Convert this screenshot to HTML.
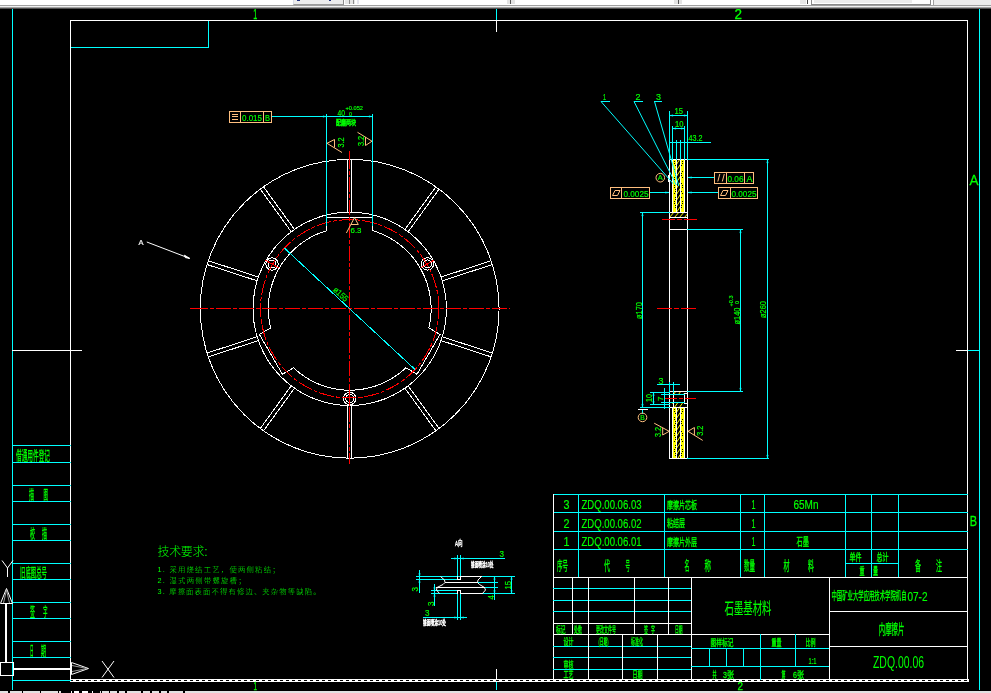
<!DOCTYPE html>
<html lang="zh-CN">
<head>
<meta charset="utf-8">
<title>内摩擦片 ZDQ.00.06</title>
<style>
html,body{margin:0;padding:0;background:#000;overflow:hidden}
#app{position:relative;width:991px;height:693px;background:#000;overflow:hidden}
#topbar{position:absolute;left:0;top:0;width:991px;height:9px;background:linear-gradient(#fff 0,#fff 5px,#a0a0a0 5px,#a0a0a0 6px,#f0f0f0 6px,#f0f0f0 7px,#a0a0a0 7px,#a0a0a0 8px,#505050 8px,#505050 9px)}
#topbar i{position:absolute;top:0;height:4px;display:block}
#botbar{position:absolute;left:0;top:691px;width:991px;height:2px;background:#000}
#botbar i{position:absolute;top:0;height:2px;display:block;background:#e2e2e2}
svg{position:absolute;left:0;top:0;will-change:transform}
.t{font-family:"Liberation Sans","Noto Sans CJK SC",sans-serif}
.tc{font-family:"Liberation Sans","Noto Sans CJK SC",sans-serif}
.tl{font-family:"Liberation Sans","Noto Sans CJK SC",sans-serif;font-weight:300}
</style>
</head>
<body>
<div id="app">
<svg width="991" height="693" viewBox="0 0 991 693">
<rect width="991" height="693" fill="#000"/>
<g shape-rendering="crispEdges" fill="none" stroke-width="1">
<line x1="12.5" y1="9" x2="12.5" y2="690" stroke="#00ffff"/>
<line x1="979.5" y1="9" x2="979.5" y2="690" stroke="#00ffff"/>
<line x1="70" y1="47.5" x2="209" y2="47.5" stroke="#00ffff"/>
<line x1="208.5" y1="20" x2="208.5" y2="48" stroke="#00ffff"/>
<line x1="70" y1="20.5" x2="968" y2="20.5" stroke="#ffffff"/>
<line x1="70.5" y1="20" x2="70.5" y2="682" stroke="#ffffff"/>
<line x1="967.5" y1="20" x2="967.5" y2="682" stroke="#ffffff"/>
<line x1="70" y1="679.5" x2="969" y2="679.5" stroke="#ffffff"/>
<line x1="70" y1="681.5" x2="969" y2="681.5" stroke="#ffffff"/>
<line x1="70" y1="680.5" x2="969" y2="680.5" stroke="#fff" stroke-dasharray="3 3" stroke-dashoffset="3"/>
<line x1="496.5" y1="9" x2="496.5" y2="20" stroke="#00ffff"/>
<line x1="496.5" y1="20" x2="496.5" y2="32" stroke="#ffffff"/>
<line x1="496.5" y1="669" x2="496.5" y2="679" stroke="#ffffff"/>
<line x1="496.5" y1="682" x2="496.5" y2="690" stroke="#00ffff"/>
<line x1="12" y1="350.5" x2="82" y2="350.5" stroke="#ffffff"/>
<line x1="956" y1="350.5" x2="968" y2="350.5" stroke="#ffffff"/>
<line x1="968" y1="350.5" x2="980" y2="350.5" stroke="#00ffff"/>
<line x1="12" y1="445.5" x2="71" y2="445.5" stroke="#00ffff"/>
<line x1="12" y1="462.5" x2="71" y2="462.5" stroke="#00ffff"/>
<line x1="12" y1="485.5" x2="71" y2="485.5" stroke="#00ffff"/>
<line x1="12" y1="501.5" x2="71" y2="501.5" stroke="#00ffff"/>
<line x1="12" y1="524.5" x2="71" y2="524.5" stroke="#00ffff"/>
<line x1="12" y1="540.5" x2="71" y2="540.5" stroke="#00ffff"/>
<line x1="12" y1="563.5" x2="71" y2="563.5" stroke="#00ffff"/>
<line x1="12" y1="579.5" x2="71" y2="579.5" stroke="#00ffff"/>
<line x1="12" y1="602.5" x2="71" y2="602.5" stroke="#00ffff"/>
<line x1="12" y1="618.5" x2="71" y2="618.5" stroke="#00ffff"/>
<line x1="12" y1="641.5" x2="71" y2="641.5" stroke="#00ffff"/>
<line x1="12" y1="657.5" x2="71" y2="657.5" stroke="#00ffff"/>
<line x1="12" y1="680.5" x2="71" y2="680.5" stroke="#00ffff"/>
<rect x="0" y="662.5" width="13" height="13" fill="none" stroke="#ffffff"/>
<line x1="14" y1="668.5" x2="71" y2="668.5" stroke="#ffffff"/>
<line x1="14" y1="669.5" x2="71" y2="669.5" stroke="#ffffff"/>
<line x1="5.5" y1="603" x2="5.5" y2="663" stroke="#ffffff"/>
<line x1="6.5" y1="603" x2="6.5" y2="663" stroke="#ffffff"/>
</g>
<g fill="none" stroke="#fff" stroke-width="1">
<path d="M0.5 603.5 L6.5 588.5 L12.5 603.5Z" stroke="#ffffff" fill="none"/>
<path d="M3.5 603 L6.5 590 L9.5 603" stroke="#999" fill="none"/>
<path d="M71.5 662.5 L88.5 668.5 L71.5 674.5Z" stroke="#ffffff" fill="none"/>
<path d="M72 665.5 L87 668.5 L72 671.5" stroke="#999" fill="none"/>
<path d="M2 560.5 L7.5 568 L13 560.5" stroke="#ffffff" fill="none"/>
<line x1="7.5" y1="568" x2="7.5" y2="577" stroke="#ffffff"/>
<line x1="102" y1="661" x2="114" y2="677.5" stroke="#ffffff"/>
<line x1="114" y1="661" x2="102" y2="677.5" stroke="#ffffff"/>
</g>
<g shape-rendering="crispEdges" fill="none" stroke-width="1">
<line x1="553" y1="494.5" x2="968" y2="494.5" stroke="#00ffff"/>
<line x1="553" y1="512.5" x2="968" y2="512.5" stroke="#00ffff"/>
<line x1="553" y1="531.5" x2="968" y2="531.5" stroke="#00ffff"/>
<line x1="553" y1="549.5" x2="968" y2="549.5" stroke="#00ffff"/>
<line x1="578.5" y1="494" x2="578.5" y2="578" stroke="#00ffff"/>
<line x1="664.5" y1="494" x2="664.5" y2="578" stroke="#00ffff"/>
<line x1="740.5" y1="494" x2="740.5" y2="578" stroke="#00ffff"/>
<line x1="764.5" y1="494" x2="764.5" y2="578" stroke="#00ffff"/>
<line x1="845.5" y1="494" x2="845.5" y2="578" stroke="#00ffff"/>
<line x1="871.5" y1="494" x2="871.5" y2="578" stroke="#00ffff"/>
<line x1="898.5" y1="494" x2="898.5" y2="578" stroke="#00ffff"/>
<line x1="845" y1="563.5" x2="899" y2="563.5" stroke="#00ffff"/>
<line x1="553.5" y1="494" x2="553.5" y2="680" stroke="#ffffff"/>
<line x1="553" y1="577.5" x2="968" y2="577.5" stroke="#ffffff"/>
<line x1="553" y1="588.5" x2="692" y2="588.5" stroke="#00ffff"/>
<line x1="553" y1="600.5" x2="692" y2="600.5" stroke="#00ffff"/>
<line x1="553" y1="611.5" x2="692" y2="611.5" stroke="#00ffff"/>
<line x1="553" y1="623.5" x2="692" y2="623.5" stroke="#ffffff"/>
<line x1="553" y1="634.5" x2="830" y2="634.5" stroke="#ffffff"/>
<line x1="553" y1="646.5" x2="692" y2="646.5" stroke="#00ffff"/>
<line x1="553" y1="657.5" x2="692" y2="657.5" stroke="#00ffff"/>
<line x1="553" y1="669.5" x2="692" y2="669.5" stroke="#00ffff"/>
<line x1="572.5" y1="577" x2="572.5" y2="635" stroke="#ffffff"/>
<line x1="588.5" y1="577" x2="588.5" y2="635" stroke="#ffffff"/>
<line x1="634.5" y1="577" x2="634.5" y2="635" stroke="#ffffff"/>
<line x1="668.5" y1="577" x2="668.5" y2="635" stroke="#ffffff"/>
<line x1="588.5" y1="634" x2="588.5" y2="680" stroke="#ffffff"/>
<line x1="622.5" y1="634" x2="622.5" y2="680" stroke="#ffffff"/>
<line x1="657.5" y1="634" x2="657.5" y2="680" stroke="#ffffff"/>
<line x1="691.5" y1="577" x2="691.5" y2="680" stroke="#ffffff"/>
<line x1="691" y1="648.5" x2="830" y2="648.5" stroke="#00ffff"/>
<line x1="691" y1="666.5" x2="830" y2="666.5" stroke="#00ffff"/>
<line x1="709.5" y1="648" x2="709.5" y2="667" stroke="#00ffff"/>
<line x1="726.5" y1="648" x2="726.5" y2="667" stroke="#00ffff"/>
<line x1="743.5" y1="648" x2="743.5" y2="667" stroke="#00ffff"/>
<line x1="760.5" y1="634" x2="760.5" y2="680" stroke="#00ffff"/>
<line x1="795.5" y1="634" x2="795.5" y2="667" stroke="#00ffff"/>
<line x1="829.5" y1="577" x2="829.5" y2="680" stroke="#ffffff"/>
<line x1="829" y1="611.5" x2="968" y2="611.5" stroke="#ffffff"/>
<line x1="829" y1="646.5" x2="968" y2="646.5" stroke="#ffffff"/>
</g>
<g shape-rendering="crispEdges" fill="none" stroke-width="1">
<circle cx="349.7" cy="308.8" r="149.4" stroke="#ffffff" fill="none"/>
<circle cx="349.7" cy="308.8" r="96.7" stroke="#ffffff" fill="none"/>
<path d="M372.7 230.72 L372.7 217.8 L326.7 217.8 L326.7 230.72 L323.75 231.65 L320.83 232.69 L317.96 233.84 L315.13 235.1 L312.35 236.47 L309.63 237.95 L306.96 239.52 L304.36 241.2 L301.82 242.97 L299.35 244.84 L296.96 246.8 L294.64 248.85 L292.4 250.99 L290.24 253.21 L288.17 255.51 L286.19 257.89 L284.3 260.34 L282.5 262.86 L280.8 265.45 L279.21 268.1 L277.71 270.81 L276.32 273.58 L275.03 276.39 L273.85 279.25 L272.78 282.16 L271.83 285.1 L270.98 288.08 L270.25 291.09 L269.63 294.13 L269.13 297.18 L268.75 300.25 L268.48 303.34 L268.33 306.43 L268.3 309.53 L268.39 312.62 L268.59 315.71 L268.92 318.79 L269.35 321.85 L269.91 324.9 L270.58 327.92 L259.39 334.38 L282.39 374.22 L293.58 367.76 L295.86 369.85 L298.22 371.85 L300.66 373.77 L303.16 375.58 L305.74 377.31 L308.37 378.93 L311.07 380.45 L313.82 381.87 L316.63 383.18 L319.48 384.38 L322.38 385.48 L325.31 386.46 L328.28 387.33 L331.28 388.09 L334.31 388.73 L337.36 389.26 L340.43 389.67 L343.51 389.96 L346.6 390.14 L349.7 390.2 L352.8 390.14 L355.89 389.96 L358.97 389.67 L362.04 389.26 L365.09 388.73 L368.12 388.09 L371.12 387.33 L374.09 386.46 L377.02 385.48 L379.92 384.38 L382.77 383.18 L385.58 381.87 L388.33 380.45 L391.03 378.93 L393.66 377.31 L396.24 375.58 L398.74 373.77 L401.18 371.85 L403.54 369.85 L405.82 367.76 L417.01 374.22 L440.01 334.38 L428.82 327.92 L429.49 324.9 L430.05 321.85 L430.48 318.79 L430.81 315.71 L431.01 312.62 L431.1 309.53 L431.07 306.43 L430.92 303.34 L430.65 300.25 L430.27 297.18 L429.77 294.13 L429.15 291.09 L428.42 288.08 L427.57 285.1 L426.62 282.16 L425.55 279.25 L424.37 276.39 L423.08 273.58 L421.69 270.81 L420.19 268.1 L418.6 265.45 L416.9 262.86 L415.1 260.34 L413.21 257.89 L411.23 255.51 L409.16 253.21 L407 250.99 L404.76 248.85 L402.44 246.8 L400.05 244.84 L397.58 242.97 L395.04 241.2 L392.44 239.52 L389.77 237.95 L387.05 236.47 L384.27 235.1 L381.44 233.84 L378.57 232.69 L375.65 231.65Z" stroke="#ffffff" fill="none"/>
<line x1="347.7" y1="212.12" x2="347.7" y2="159.41" stroke="#ffffff"/>
<line x1="351.7" y1="212.12" x2="351.7" y2="159.41" stroke="#ffffff"/>
<line x1="291.26" y1="231.76" x2="260.27" y2="189.12" stroke="#ffffff"/>
<line x1="294.49" y1="229.41" x2="263.51" y2="186.77" stroke="#ffffff"/>
<line x1="257.13" y1="280.83" x2="207.01" y2="264.54" stroke="#ffffff"/>
<line x1="258.37" y1="277.02" x2="208.24" y2="260.73" stroke="#ffffff"/>
<line x1="258.37" y1="340.58" x2="208.24" y2="356.87" stroke="#ffffff"/>
<line x1="257.13" y1="336.77" x2="207.01" y2="353.06" stroke="#ffffff"/>
<line x1="294.49" y1="388.19" x2="263.51" y2="430.83" stroke="#ffffff"/>
<line x1="291.26" y1="385.84" x2="260.27" y2="428.48" stroke="#ffffff"/>
<line x1="351.7" y1="405.48" x2="351.7" y2="458.19" stroke="#ffffff"/>
<line x1="347.7" y1="405.48" x2="347.7" y2="458.19" stroke="#ffffff"/>
<line x1="408.14" y1="385.84" x2="439.13" y2="428.48" stroke="#ffffff"/>
<line x1="404.91" y1="388.19" x2="435.89" y2="430.83" stroke="#ffffff"/>
<line x1="442.27" y1="336.77" x2="492.39" y2="353.06" stroke="#ffffff"/>
<line x1="441.03" y1="340.58" x2="491.16" y2="356.87" stroke="#ffffff"/>
<line x1="441.03" y1="277.02" x2="491.16" y2="260.73" stroke="#ffffff"/>
<line x1="442.27" y1="280.83" x2="492.39" y2="264.54" stroke="#ffffff"/>
<line x1="404.91" y1="229.41" x2="435.89" y2="186.77" stroke="#ffffff"/>
<line x1="408.14" y1="231.76" x2="439.13" y2="189.12" stroke="#ffffff"/>
<circle cx="427.38" cy="263.95" r="6.2" stroke="#ffffff" fill="none"/>
<circle cx="427.38" cy="263.95" r="4" stroke="#ffffff" fill="none"/>
<line x1="420.89" y1="267.7" x2="433.88" y2="260.2" stroke="#ff0000"/>
<circle cx="272.02" cy="263.95" r="6.2" stroke="#ffffff" fill="none"/>
<circle cx="272.02" cy="263.95" r="4" stroke="#ffffff" fill="none"/>
<line x1="278.51" y1="267.7" x2="265.52" y2="260.2" stroke="#ff0000"/>
<circle cx="349.7" cy="398.5" r="6.2" stroke="#ffffff" fill="none"/>
<circle cx="349.7" cy="398.5" r="4" stroke="#ffffff" fill="none"/>
<line x1="349.7" y1="391" x2="349.7" y2="406" stroke="#ff0000"/>
<line x1="190" y1="308.5" x2="194" y2="308.5" stroke="#ff0000"/>
<line x1="193" y1="308.5" x2="510" y2="308.5" stroke="#ff0000" stroke-dasharray="15 2 4 2"/>
<line x1="349.5" y1="151" x2="349.5" y2="155" stroke="#ff0000"/>
<line x1="349.5" y1="154" x2="349.5" y2="464" stroke="#ff0000" stroke-dasharray="15 2 4 2"/>
<circle cx="349.7" cy="308.8" r="89.2" stroke="#ff0000" fill="none" stroke-dasharray="15 2 4 2" stroke-dashoffset="5"/>
<line x1="326.5" y1="114" x2="326.5" y2="226" stroke="#00ffff"/>
<line x1="372.5" y1="114" x2="372.5" y2="226" stroke="#00ffff"/>
<line x1="272" y1="116.5" x2="373" y2="116.5" stroke="#00ffff"/>
<line x1="284.36" y1="248.08" x2="415.04" y2="369.52" stroke="#00ffff"/>
</g>
<g shape-rendering="crispEdges" fill="none" stroke-width="1">
<rect x="229.5" y="111.5" width="42" height="11" fill="none" stroke="#ffbf7f"/>
<line x1="240.5" y1="111" x2="240.5" y2="123" stroke="#ffbf7f"/>
<line x1="263.5" y1="111" x2="263.5" y2="123" stroke="#ffbf7f"/>
<line x1="232" y1="114.5" x2="238" y2="114.5" stroke="#ffbf7f"/>
<line x1="232" y1="116.5" x2="238" y2="116.5" stroke="#ffbf7f"/>
<line x1="232" y1="119.5" x2="238" y2="119.5" stroke="#ffbf7f"/>
</g>
<g fill="none" stroke="#ffbf7f" stroke-width="1">
<path d="M334.5 139.5 L327 143.3 L342 152.5" stroke="#ffbf7f" fill="none"/>
<line x1="334.5" y1="139.5" x2="334.5" y2="147.5" stroke="#ffbf7f"/>
<path d="M365.5 145.5 L372 141.2 L357.5 132.3" stroke="#ffbf7f" fill="none"/>
<line x1="365.5" y1="137" x2="365.5" y2="145.5" stroke="#ffbf7f"/>
<path d="M346.4 233 L354.5 217.6 L358.3 224.5 L351 224.5" stroke="#ffbf7f" fill="none"/>
</g>
<g fill="none" stroke="#fff" stroke-width="1">
<line x1="146.8" y1="242" x2="189.7" y2="258.4" stroke="#ffffff"/>
<path d="M189.7 258.4 L184.5 255.2 L185.3 257.6Z" stroke="#ffffff" fill="#ffffff"/>
</g>
<g shape-rendering="crispEdges" fill="none" stroke-width="1">
<rect x="673" y="160" width="3" height="52" fill="#ffff00" stroke="none"/>
<rect x="681" y="160" width="3" height="52" fill="#ffff00" stroke="none"/>
<rect x="673" y="408" width="3" height="50" fill="#ffff00" stroke="none"/>
<rect x="681" y="408" width="3" height="50" fill="#ffff00" stroke="none"/>
</g>
<g fill="none" stroke-width="1">
<clipPath id="c1"><rect x="677" y="160" width="3" height="52"/></clipPath>
<clipPath id="c2"><rect x="677" y="408" width="3" height="50"/></clipPath>
<clipPath id="c3"><rect x="670" y="212" width="17" height="5"/></clipPath>
<clipPath id="c4"><rect x="674" y="392" width="10" height="2"/><rect x="672" y="403" width="12" height="4"/></clipPath>
<path clip-path="url(#c1)" d="M676 159 L682 150 M676 165 L682 156 M676 171 L682 162 M676 177 L682 168 M676 183 L682 174 M676 189 L682 180 M676 195 L682 186 M676 201 L682 192 M676 207 L682 198 M676 213 L682 204 M676 219 L682 210 M676 225 L682 216 M676 231 L682 222" stroke="#ffff00"/>
<path clip-path="url(#c2)" d="M676 407 L682 398 M676 413 L682 404 M676 419 L682 410 M676 425 L682 416 M676 431 L682 422 M676 437 L682 428 M676 443 L682 434 M676 449 L682 440 M676 455 L682 446 M676 461 L682 452 M676 467 L682 458 M676 473 L682 464" stroke="#ffff00"/>
<path clip-path="url(#c3)" d="M664 218 L670 211 M669 218 L675 211 M674 218 L680 211 M679 218 L685 211 M684 218 L690 211 M689 218 L695 211" stroke="#ffff00"/>
<path clip-path="url(#c4)" d="M664 408 L676 391 M669 408 L681 391 M674 408 L686 391 M679 408 L691 391 M684 408 L696 391 M689 408 L701 391" stroke="#ffff00"/>
<path d="M674 161.5 h1 M682 161.5 h1 M674 163.5 h1 M682 163.5 h1 M675 165.5 h1 M681 165.5 h1 M674 169.5 h1 M674 171.5 h1 M682 171.5 h1 M675 173.5 h1 M681 173.5 h1 M675 175.5 h1 M681 175.5 h1 M674 177.5 h1 M682 177.5 h1 M674 179.5 h1 M675 183.5 h1 M681 183.5 h1 M674 185.5 h1 M682 185.5 h1 M674 187.5 h1 M682 187.5 h1 M675 189.5 h1 M675 191.5 h1 M681 191.5 h1 M674 193.5 h1 M682 193.5 h1 M675 197.5 h1 M681 197.5 h1 M675 199.5 h1 M674 201.5 h1 M682 201.5 h1 M674 203.5 h1 M682 203.5 h1 M675 205.5 h1 M681 205.5 h1 M675 207.5 h1 M681 207.5 h1 M674 409.5 h1 M682 409.5 h1 M674 411.5 h1 M682 411.5 h1 M675 413.5 h1 M681 413.5 h1 M674 417.5 h1 M674 419.5 h1 M682 419.5 h1 M675 421.5 h1 M681 421.5 h1 M675 423.5 h1 M681 423.5 h1 M674 425.5 h1 M682 425.5 h1 M674 427.5 h1 M675 431.5 h1 M681 431.5 h1 M674 433.5 h1 M682 433.5 h1 M674 435.5 h1 M682 435.5 h1 M675 437.5 h1 M675 439.5 h1 M681 439.5 h1 M674 441.5 h1 M682 441.5 h1 M675 445.5 h1 M681 445.5 h1 M675 447.5 h1 M674 449.5 h1 M682 449.5 h1 M674 451.5 h1 M682 451.5 h1 M675 453.5 h1 M681 453.5 h1 M675 455.5 h1 M681 455.5 h1" stroke="#000" shape-rendering="crispEdges"/>
</g>
<g shape-rendering="crispEdges" fill="none" stroke-width="1">
<line x1="669.5" y1="159" x2="669.5" y2="459" stroke="#ffffff"/>
<line x1="687.5" y1="159" x2="687.5" y2="459" stroke="#ffffff"/>
<line x1="669" y1="159.5" x2="688" y2="159.5" stroke="#ffffff"/>
<line x1="669" y1="212.5" x2="688" y2="212.5" stroke="#ffffff"/>
<line x1="669" y1="217.5" x2="688" y2="217.5" stroke="#ffffff"/>
<line x1="669" y1="229.5" x2="688" y2="229.5" stroke="#ffffff"/>
<line x1="669" y1="391.5" x2="688" y2="391.5" stroke="#ffffff"/>
<line x1="669" y1="407.5" x2="688" y2="407.5" stroke="#ffffff"/>
<line x1="669" y1="458.5" x2="688" y2="458.5" stroke="#ffffff"/>
<line x1="672.5" y1="160" x2="672.5" y2="213" stroke="#ffffff"/>
<line x1="672.5" y1="407" x2="672.5" y2="459" stroke="#ffffff"/>
<line x1="676.5" y1="160" x2="676.5" y2="213" stroke="#ffffff"/>
<line x1="676.5" y1="407" x2="676.5" y2="459" stroke="#ffffff"/>
<line x1="680.5" y1="160" x2="680.5" y2="213" stroke="#ffffff"/>
<line x1="680.5" y1="407" x2="680.5" y2="459" stroke="#ffffff"/>
<line x1="684.5" y1="160" x2="684.5" y2="213" stroke="#ffffff"/>
<line x1="684.5" y1="407" x2="684.5" y2="459" stroke="#ffffff"/>
<rect x="684.5" y="393.5" width="3" height="10" fill="none" stroke="#ffffff"/>
<line x1="673.5" y1="392" x2="673.5" y2="407" stroke="#ffffff"/>
<line x1="662" y1="219.5" x2="675" y2="219.5" stroke="#ff0000"/>
<line x1="677" y1="219.5" x2="682" y2="219.5" stroke="#ff0000"/>
<line x1="684" y1="219.5" x2="697" y2="219.5" stroke="#ff0000"/>
<line x1="657" y1="308.5" x2="672" y2="308.5" stroke="#ff0000"/>
<line x1="674" y1="308.5" x2="679" y2="308.5" stroke="#ff0000"/>
<line x1="681" y1="308.5" x2="696" y2="308.5" stroke="#ff0000"/>
<line x1="665" y1="398.5" x2="677" y2="398.5" stroke="#ff0000"/>
<line x1="679" y1="398.5" x2="683" y2="398.5" stroke="#ff0000"/>
<line x1="685" y1="398.5" x2="696" y2="398.5" stroke="#ff0000"/>
<line x1="669.5" y1="111" x2="669.5" y2="160" stroke="#00ffff"/>
<line x1="687.5" y1="111" x2="687.5" y2="160" stroke="#00ffff"/>
<line x1="669" y1="115.5" x2="688" y2="115.5" stroke="#00ffff"/>
<line x1="672.5" y1="126" x2="672.5" y2="160" stroke="#00ffff"/>
<line x1="684.5" y1="126" x2="684.5" y2="160" stroke="#00ffff"/>
<line x1="672" y1="128.5" x2="685" y2="128.5" stroke="#00ffff"/>
<line x1="669" y1="142.5" x2="711" y2="142.5" stroke="#00ffff"/>
<line x1="676.5" y1="140" x2="676.5" y2="160" stroke="#00ffff"/>
<line x1="680.5" y1="140" x2="680.5" y2="160" stroke="#00ffff"/>
<line x1="687" y1="159.5" x2="769" y2="159.5" stroke="#00ffff"/>
<line x1="687" y1="458.5" x2="769" y2="458.5" stroke="#00ffff"/>
<line x1="767.5" y1="159" x2="767.5" y2="459" stroke="#00ffff"/>
<line x1="687" y1="229.5" x2="743" y2="229.5" stroke="#00ffff"/>
<line x1="687" y1="391.5" x2="743" y2="391.5" stroke="#00ffff"/>
<line x1="740.5" y1="229" x2="740.5" y2="392" stroke="#00ffff"/>
<line x1="640" y1="212.5" x2="670" y2="212.5" stroke="#00ffff"/>
<line x1="640" y1="407.5" x2="670" y2="407.5" stroke="#00ffff"/>
<line x1="642.5" y1="212" x2="642.5" y2="408" stroke="#00ffff"/>
<line x1="688" y1="177.5" x2="715" y2="177.5" stroke="#00ffff"/>
<line x1="650" y1="192.5" x2="669" y2="192.5" stroke="#00ffff"/>
<line x1="688" y1="192.5" x2="719" y2="192.5" stroke="#00ffff"/>
<line x1="601" y1="101.5" x2="610" y2="101.5" stroke="#00ffff"/>
<line x1="634" y1="101.5" x2="643" y2="101.5" stroke="#00ffff"/>
<line x1="654" y1="101.5" x2="662" y2="101.5" stroke="#00ffff"/>
<line x1="657" y1="384.5" x2="680" y2="384.5" stroke="#00ffff"/>
<line x1="669.5" y1="382" x2="669.5" y2="392" stroke="#00ffff"/>
<line x1="673.5" y1="382" x2="673.5" y2="393" stroke="#00ffff"/>
<line x1="650" y1="392.5" x2="670" y2="392.5" stroke="#00ffff"/>
<line x1="650" y1="404.5" x2="670" y2="404.5" stroke="#00ffff"/>
<line x1="653.5" y1="392" x2="653.5" y2="405" stroke="#00ffff"/>
<line x1="661" y1="394.5" x2="685" y2="394.5" stroke="#00ffff"/>
<line x1="661" y1="402.5" x2="685" y2="402.5" stroke="#00ffff"/>
<line x1="664.5" y1="388" x2="664.5" y2="409" stroke="#00ffff"/>
<line x1="638" y1="409.5" x2="648" y2="409.5" stroke="#ffffff"/>
<line x1="642.5" y1="410" x2="642.5" y2="414" stroke="#00ffff"/>
<line x1="668.5" y1="175" x2="668.5" y2="182" stroke="#ffffff"/>
<rect x="714.5" y="172.5" width="39" height="11" fill="none" stroke="#ffbf7f"/>
<line x1="726.5" y1="172" x2="726.5" y2="184" stroke="#ffbf7f"/>
<line x1="744.5" y1="172" x2="744.5" y2="184" stroke="#ffbf7f"/>
<rect x="610.5" y="187.5" width="39" height="11" fill="none" stroke="#ffbf7f"/>
<line x1="621.5" y1="187" x2="621.5" y2="199" stroke="#ffbf7f"/>
<rect x="718.5" y="187.5" width="39" height="11" fill="none" stroke="#ffbf7f"/>
<line x1="730.5" y1="187" x2="730.5" y2="199" stroke="#ffbf7f"/>
</g>
<g fill="none" stroke-width="1">
<line x1="601" y1="101.5" x2="673.5" y2="184" stroke="#00ffff"/>
<line x1="634" y1="101.5" x2="676.3" y2="185" stroke="#00ffff"/>
<line x1="654.5" y1="101.5" x2="678.8" y2="186" stroke="#00ffff"/>
<circle cx="660.3" cy="177.7" r="4.3" stroke="#ffbf7f" fill="none"/>
<circle cx="642.5" cy="417.4" r="4.3" stroke="#ffbf7f" fill="none"/>
<line x1="717.8" y1="181.5" x2="719.8" y2="174" stroke="#ffbf7f"/>
<line x1="722.3" y1="181.5" x2="724.3" y2="174" stroke="#ffbf7f"/>
<path d="M612.5 195.5 L615 190.5 L620 190.5 L617.5 195.5Z" stroke="#ffbf7f" fill="none"/>
<path d="M720.5 195.5 L723 190.5 L728 190.5 L725.5 195.5Z" stroke="#ffbf7f" fill="none"/>
<path d="M654.2 423.2 L669.2 431.3 L662.7 435" stroke="#ffbf7f" fill="none"/>
<line x1="662.7" y1="427.8" x2="662.7" y2="435" stroke="#ffbf7f"/>
<path d="M702.7 440.4 L688 431.3 L694.4 427.5" stroke="#ffbf7f" fill="none"/>
<line x1="694.4" y1="427.5" x2="694.4" y2="435.2" stroke="#ffbf7f"/>
</g>
<g shape-rendering="crispEdges" fill="none" stroke-width="1">
<line x1="451" y1="558.5" x2="505" y2="558.5" stroke="#00ffff"/>
<line x1="457.5" y1="555" x2="457.5" y2="580" stroke="#00ffff"/>
<line x1="460.5" y1="555" x2="460.5" y2="580" stroke="#00ffff"/>
<line x1="416" y1="576.5" x2="515" y2="576.5" stroke="#00ffff"/>
<line x1="416" y1="579.5" x2="458" y2="579.5" stroke="#00ffff"/>
<line x1="419.5" y1="570" x2="419.5" y2="593" stroke="#00ffff"/>
<line x1="431" y1="590.5" x2="458" y2="590.5" stroke="#00ffff"/>
<line x1="431" y1="593.5" x2="458" y2="593.5" stroke="#00ffff"/>
<line x1="482" y1="593.5" x2="515" y2="593.5" stroke="#00ffff"/>
<line x1="434.5" y1="584" x2="434.5" y2="606" stroke="#00ffff"/>
<line x1="477" y1="582.5" x2="498" y2="582.5" stroke="#00ffff"/>
<line x1="484" y1="587.5" x2="498" y2="587.5" stroke="#00ffff"/>
<line x1="494.5" y1="576" x2="494.5" y2="600" stroke="#00ffff"/>
<line x1="511.5" y1="576" x2="511.5" y2="594" stroke="#00ffff"/>
<line x1="457.5" y1="590" x2="457.5" y2="620" stroke="#00ffff"/>
<line x1="460.5" y1="590" x2="460.5" y2="620" stroke="#00ffff"/>
<line x1="423" y1="617.5" x2="467" y2="617.5" stroke="#00ffff"/>
<line x1="460" y1="576.5" x2="482" y2="576.5" stroke="#ffffff"/>
<line x1="457.5" y1="576" x2="457.5" y2="580" stroke="#ffffff"/>
<line x1="460.5" y1="576" x2="460.5" y2="580" stroke="#ffffff"/>
<line x1="457" y1="579.5" x2="461" y2="579.5" stroke="#ffffff"/>
<line x1="445" y1="582.5" x2="478" y2="582.5" stroke="#ffffff"/>
<line x1="436" y1="587.5" x2="485" y2="587.5" stroke="#ffffff"/>
<line x1="460" y1="593.5" x2="483" y2="593.5" stroke="#ffffff"/>
<line x1="457.5" y1="590" x2="457.5" y2="594" stroke="#ffffff"/>
<line x1="460.5" y1="590" x2="460.5" y2="594" stroke="#ffffff"/>
<line x1="457" y1="590.5" x2="461" y2="590.5" stroke="#ffffff"/>
</g>
<g fill="none" stroke="#fff" stroke-width="1">
<path d="M440.5 576.5 L444.5 580 L445 582.5 L443 584.5 L437 587.5 L436.5 590 L439.5 593.5" stroke="#ffffff" fill="none"/>
<path d="M481.5 576.5 L478 580 L477.5 582.5 L479.5 584.5 L484.5 587.5 L485.5 590 L482.5 593.5" stroke="#ffffff" fill="none"/>
</g>
<g>
<polygon points="326.5,116.5 323,117.3 323,115.7" fill="#00ffff" stroke="#00ffff" stroke-width="0.3"/>
<polygon points="372.5,116.5 369,117.3 369,115.7" fill="#00ffff" stroke="#00ffff" stroke-width="0.3"/>
<polygon points="284.36,248.08 287.47,249.88 286.38,251.05" fill="#00ffff" stroke="#00ffff" stroke-width="0.3"/>
<polygon points="415.04,369.52 411.93,367.72 413.02,366.55" fill="#00ffff" stroke="#00ffff" stroke-width="0.3"/>
<polygon points="767.5,159.5 768.3,163 766.7,163" fill="#00ffff" stroke="#00ffff" stroke-width="0.3"/>
<polygon points="767.5,458.5 766.7,455 768.3,455" fill="#00ffff" stroke="#00ffff" stroke-width="0.3"/>
<polygon points="740.5,229.5 741.3,233 739.7,233" fill="#00ffff" stroke="#00ffff" stroke-width="0.3"/>
<polygon points="740.5,391.5 739.7,388 741.3,388" fill="#00ffff" stroke="#00ffff" stroke-width="0.3"/>
<polygon points="642.5,212.5 643.3,216 641.7,216" fill="#00ffff" stroke="#00ffff" stroke-width="0.3"/>
<polygon points="642.5,407.5 641.7,404 643.3,404" fill="#00ffff" stroke="#00ffff" stroke-width="0.3"/>
<polygon points="669.5,115.5 673,114.7 673,116.3" fill="#00ffff" stroke="#00ffff" stroke-width="0.3"/>
<polygon points="687.5,115.5 684,116.3 684,114.7" fill="#00ffff" stroke="#00ffff" stroke-width="0.3"/>
<polygon points="672.5,128.5 676,127.7 676,129.3" fill="#00ffff" stroke="#00ffff" stroke-width="0.3"/>
<polygon points="684.5,128.5 681,129.3 681,127.7" fill="#00ffff" stroke="#00ffff" stroke-width="0.3"/>
<polygon points="688,177.5 691.5,176.7 691.5,178.3" fill="#00ffff" stroke="#00ffff" stroke-width="0.3"/>
<polygon points="669,192.5 665.5,193.3 665.5,191.7" fill="#00ffff" stroke="#00ffff" stroke-width="0.3"/>
<polygon points="688,192.5 691.5,191.7 691.5,193.3" fill="#00ffff" stroke="#00ffff" stroke-width="0.3"/>
<polygon points="494.5,576.5 495.3,579.5 493.7,579.5" fill="#00ffff" stroke="#00ffff" stroke-width="0.3"/>
<polygon points="494.5,593.5 493.7,590.5 495.3,590.5" fill="#00ffff" stroke="#00ffff" stroke-width="0.3"/>
<polygon points="511.5,576.5 512.3,579.5 510.7,579.5" fill="#00ffff" stroke="#00ffff" stroke-width="0.3"/>
<polygon points="511.5,593.5 510.7,590.5 512.3,590.5" fill="#00ffff" stroke="#00ffff" stroke-width="0.3"/>
<polygon points="419.5,576.5 418.7,573.5 420.3,573.5" fill="#00ffff" stroke="#00ffff" stroke-width="0.3"/>
<polygon points="419.5,579.5 420.3,582.5 418.7,582.5" fill="#00ffff" stroke="#00ffff" stroke-width="0.3"/>
<polygon points="434.5,590.5 433.7,587.5 435.3,587.5" fill="#00ffff" stroke="#00ffff" stroke-width="0.3"/>
<polygon points="434.5,593.5 435.3,596.5 433.7,596.5" fill="#00ffff" stroke="#00ffff" stroke-width="0.3"/>
<polygon points="457.5,558.5 454.5,559.3 454.5,557.7" fill="#00ffff" stroke="#00ffff" stroke-width="0.3"/>
<polygon points="460.5,558.5 463.5,557.7 463.5,559.3" fill="#00ffff" stroke="#00ffff" stroke-width="0.3"/>
<polygon points="457.5,617.5 454.5,618.3 454.5,616.7" fill="#00ffff" stroke="#00ffff" stroke-width="0.3"/>
<polygon points="460.5,617.5 463.5,616.7 463.5,618.3" fill="#00ffff" stroke="#00ffff" stroke-width="0.3"/>
<polygon points="653.5,392.5 654.3,395.5 652.7,395.5" fill="#00ffff" stroke="#00ffff" stroke-width="0.3"/>
<polygon points="653.5,404.5 652.7,401.5 654.3,401.5" fill="#00ffff" stroke="#00ffff" stroke-width="0.3"/>
</g>
<g opacity="0.999">
<text class="t" x="253.3" y="19" font-size="14" fill="#00ff00" textLength="4" lengthAdjust="spacingAndGlyphs" stroke="#00ff00" stroke-width="0.3">1</text>
<text class="t" x="734.5" y="19.3" font-size="14" fill="#00ff00" textLength="7.5" lengthAdjust="spacingAndGlyphs" stroke="#00ff00" stroke-width="0.3">2</text>
<text class="t" x="969.6" y="185" font-size="15.5" fill="#00ff00" textLength="9" lengthAdjust="spacingAndGlyphs" stroke="#00ff00" stroke-width="0.3">A</text>
<text class="t" x="969.8" y="526" font-size="14" fill="#00ff00" textLength="7.3" lengthAdjust="spacingAndGlyphs" stroke="#00ff00" stroke-width="0.3">B</text>
<text class="t" x="253.6" y="690" font-size="11" fill="#00ff00" textLength="3.5" lengthAdjust="spacingAndGlyphs" stroke="#00ff00" stroke-width="0.3">1</text>
<text class="t" x="737.5" y="690" font-size="11" fill="#00ff00" textLength="5.5" lengthAdjust="spacingAndGlyphs" stroke="#00ff00" stroke-width="0.3">2</text>
<text class="t" x="242" y="121" font-size="9.5" fill="#00ff00" textLength="20" lengthAdjust="spacingAndGlyphs" stroke="#00ff00" stroke-width="0.2">0.015</text>
<text class="t" x="265" y="121" font-size="9" fill="#00ff00" textLength="5" lengthAdjust="spacingAndGlyphs" stroke="#00ff00" stroke-width="0.2">B</text>
<text class="t" x="337.5" y="116" font-size="8.5" fill="#00ff00" textLength="7.5" lengthAdjust="spacingAndGlyphs" stroke="#00ff00" stroke-width="0.2">40</text>
<text class="t" x="345.5" y="110" font-size="5.5" fill="#00ff00" textLength="17.5" lengthAdjust="spacingAndGlyphs" stroke="#00ff00" stroke-width="0.2">+0.052</text>
<text class="t" x="349" y="115.5" font-size="5.5" fill="#00ff00" textLength="3" lengthAdjust="spacingAndGlyphs" stroke="#00ff00" stroke-width="0.2">0</text>
<text class="tc" x="336" y="124.5" font-size="7" fill="#00ff00" textLength="20" lengthAdjust="spacingAndGlyphs" stroke="#00ff00" stroke-width="0.5">配磨两块</text>
<text class="t" x="343.5" y="147.5" font-size="8.5" fill="#00ff00" textLength="10" lengthAdjust="spacingAndGlyphs" stroke="#00ff00" stroke-width="0.2" transform="rotate(-90 343.5 147.5)">3.2</text>
<text class="t" x="363.5" y="146" font-size="8.5" fill="#00ff00" textLength="10" lengthAdjust="spacingAndGlyphs" stroke="#00ff00" stroke-width="0.2" transform="rotate(-90 363.5 146)">3.2</text>
<text class="t" x="350.5" y="233.2" font-size="8" fill="#00ff00" textLength="11" lengthAdjust="spacingAndGlyphs" stroke="#00ff00" stroke-width="0.2">6.3</text>
<text class="t" x="332.5" y="290.5" font-size="8.5" fill="#00ff00" textLength="17" lengthAdjust="spacingAndGlyphs" stroke="#00ff00" stroke-width="0.2" transform="rotate(42.9 332.5 290.5)">ø155</text>
<text class="t" x="138.5" y="244.5" font-size="8" fill="#ffffff" textLength="5" lengthAdjust="spacingAndGlyphs" stroke="#ffffff" stroke-width="0.2">A</text>
<text class="t" x="603" y="100" font-size="9" fill="#00ff00" textLength="3" lengthAdjust="spacingAndGlyphs" stroke="#00ff00" stroke-width="0.2">1</text>
<text class="t" x="635.5" y="100" font-size="9" fill="#00ff00" textLength="5" lengthAdjust="spacingAndGlyphs" stroke="#00ff00" stroke-width="0.2">2</text>
<text class="t" x="656" y="100" font-size="9" fill="#00ff00" textLength="5" lengthAdjust="spacingAndGlyphs" stroke="#00ff00" stroke-width="0.2">3</text>
<text class="t" x="674.5" y="114" font-size="9" fill="#00ff00" textLength="8.5" lengthAdjust="spacingAndGlyphs" stroke="#00ff00" stroke-width="0.2">15</text>
<text class="t" x="675" y="127" font-size="9" fill="#00ff00" textLength="8.5" lengthAdjust="spacingAndGlyphs" stroke="#00ff00" stroke-width="0.2">10</text>
<text class="t" x="688.5" y="141" font-size="9" fill="#00ff00" textLength="14" lengthAdjust="spacingAndGlyphs" stroke="#00ff00" stroke-width="0.2">43.2</text>
<text class="t" x="657.7" y="180.3" font-size="6.5" fill="#00ff00" textLength="5" lengthAdjust="spacingAndGlyphs" stroke="#00ff00" stroke-width="0.2">A</text>
<text class="t" x="727.5" y="182" font-size="9.5" fill="#00ff00" textLength="16" lengthAdjust="spacingAndGlyphs" stroke="#00ff00" stroke-width="0.2">0.06</text>
<text class="t" x="746.5" y="182" font-size="9.5" fill="#00ff00" textLength="6" lengthAdjust="spacingAndGlyphs" stroke="#00ff00" stroke-width="0.2">A</text>
<text class="t" x="623.5" y="197" font-size="9.5" fill="#00ff00" textLength="25" lengthAdjust="spacingAndGlyphs" stroke="#00ff00" stroke-width="0.2">0.0025</text>
<text class="t" x="731.5" y="197" font-size="9.5" fill="#00ff00" textLength="25" lengthAdjust="spacingAndGlyphs" stroke="#00ff00" stroke-width="0.2">0.0025</text>
<text class="t" x="641.5" y="319" font-size="8.5" fill="#00ff00" textLength="17" lengthAdjust="spacingAndGlyphs" stroke="#00ff00" stroke-width="0.2" transform="rotate(-90 641.5 319)">ø170</text>
<text class="t" x="739.5" y="324.5" font-size="8.5" fill="#00ff00" textLength="17" lengthAdjust="spacingAndGlyphs" stroke="#00ff00" stroke-width="0.2" transform="rotate(-90 739.5 324.5)">ø140</text>
<text class="t" x="732.5" y="306.5" font-size="5.5" fill="#00ff00" textLength="11" lengthAdjust="spacingAndGlyphs" stroke="#00ff00" stroke-width="0.2" transform="rotate(-90 732.5 306.5)">+0.3</text>
<text class="t" x="738.5" y="304" font-size="5.5" fill="#00ff00" textLength="3" lengthAdjust="spacingAndGlyphs" stroke="#00ff00" stroke-width="0.2" transform="rotate(-90 738.5 304)">0</text>
<text class="t" x="765.5" y="318" font-size="8.5" fill="#00ff00" textLength="17" lengthAdjust="spacingAndGlyphs" stroke="#00ff00" stroke-width="0.2" transform="rotate(-90 765.5 318)">ø260</text>
<text class="t" x="658.5" y="383.5" font-size="8.5" fill="#00ff00" textLength="5" lengthAdjust="spacingAndGlyphs" stroke="#00ff00" stroke-width="0.2">3</text>
<text class="t" x="651.5" y="402" font-size="8.5" fill="#00ff00" textLength="8" lengthAdjust="spacingAndGlyphs" stroke="#00ff00" stroke-width="0.2" transform="rotate(-90 651.5 402)">10</text>
<text class="t" x="662.5" y="401" font-size="8" fill="#00ff00" textLength="4.5" lengthAdjust="spacingAndGlyphs" stroke="#00ff00" stroke-width="0.2" transform="rotate(-90 662.5 401)">7</text>
<text class="t" x="640.3" y="420.2" font-size="6.5" fill="#00ff00" textLength="4.5" lengthAdjust="spacingAndGlyphs" stroke="#00ff00" stroke-width="0.2">B</text>
<text class="t" x="660.5" y="437" font-size="8.5" fill="#00ff00" textLength="10" lengthAdjust="spacingAndGlyphs" stroke="#00ff00" stroke-width="0.2" transform="rotate(-90 660.5 437)">3.2</text>
<text class="t" x="703" y="435.8" font-size="8.5" fill="#00ff00" textLength="10" lengthAdjust="spacingAndGlyphs" stroke="#00ff00" stroke-width="0.2" transform="rotate(-90 703 435.8)">3.2</text>
<text class="t" x="455" y="545.8" font-size="7.5" fill="#ffffff" textLength="7.5" lengthAdjust="spacingAndGlyphs" stroke="#ffffff" stroke-width="0.4">A向</text>
<text class="t" x="499.5" y="557" font-size="8.5" fill="#00ff00" textLength="4.5" lengthAdjust="spacingAndGlyphs" stroke="#00ff00" stroke-width="0.2">3</text>
<text class="tc" x="471" y="566.8" font-size="7" fill="#ffffff" textLength="22.5" lengthAdjust="spacingAndGlyphs" stroke="#ffffff" stroke-width="0.5">锥面喷涂10处</text>
<text class="t" x="418" y="591.5" font-size="8.5" fill="#00ff00" textLength="4.5" lengthAdjust="spacingAndGlyphs" stroke="#00ff00" stroke-width="0.2" transform="rotate(-90 418 591.5)">3</text>
<text class="t" x="433.5" y="606" font-size="8.5" fill="#00ff00" textLength="4.5" lengthAdjust="spacingAndGlyphs" stroke="#00ff00" stroke-width="0.2" transform="rotate(-90 433.5 606)">3</text>
<text class="t" x="510.5" y="589.5" font-size="8.5" fill="#00ff00" textLength="8.5" lengthAdjust="spacingAndGlyphs" stroke="#00ff00" stroke-width="0.2" transform="rotate(-90 510.5 589.5)">15</text>
<text class="t" x="493.5" y="599.5" font-size="8.5" fill="#00ff00" textLength="4.5" lengthAdjust="spacingAndGlyphs" stroke="#00ff00" stroke-width="0.2" transform="rotate(-90 493.5 599.5)">4</text>
<text class="t" x="425" y="615.8" font-size="8.5" fill="#00ff00" textLength="4.5" lengthAdjust="spacingAndGlyphs" stroke="#00ff00" stroke-width="0.2">3</text>
<text class="tc" x="423" y="624.8" font-size="7" fill="#ffffff" textLength="23" lengthAdjust="spacingAndGlyphs" stroke="#ffffff" stroke-width="0.5">锥面喷涂10处</text>
<text class="tl" x="157.5" y="555.5" font-size="12" fill="#00ff00" textLength="50" lengthAdjust="spacing">技术要求:</text>
<text class="tl" x="157.5" y="571.5" font-size="7.3" fill="#00ff00" textLength="122" lengthAdjust="spacing">1. 采用烧结工艺，使两侧粘结；</text>
<text class="tl" x="157.5" y="582.8" font-size="7.3" fill="#00ff00" textLength="88" lengthAdjust="spacing">2. 湿式两侧带螺旋槽；</text>
<text class="tl" x="157.5" y="593.5" font-size="7.3" fill="#00ff00" textLength="163" lengthAdjust="spacing">3. 摩擦面表面不得有修边、夹杂物等缺陷。</text>
<text class="tc" x="16" y="460" font-size="13" fill="#00ff00" textLength="34" lengthAdjust="spacingAndGlyphs" stroke="#00ff00" stroke-width="0.35">借通用件登记</text>
<text class="tc" x="29" y="499.2" font-size="13" fill="#00ff00" textLength="5" lengthAdjust="spacingAndGlyphs" stroke="#00ff00" stroke-width="0.35">描</text>
<text class="tc" x="43.5" y="499.2" font-size="13" fill="#00ff00" textLength="4.5" lengthAdjust="spacingAndGlyphs" stroke="#00ff00" stroke-width="0.35">图</text>
<text class="tc" x="30" y="538.2" font-size="13" fill="#00ff00" textLength="5" lengthAdjust="spacingAndGlyphs" stroke="#00ff00" stroke-width="0.35">校</text>
<text class="tc" x="42" y="538.2" font-size="13" fill="#00ff00" textLength="5" lengthAdjust="spacingAndGlyphs" stroke="#00ff00" stroke-width="0.35">描</text>
<text class="tc" x="20" y="577.2" font-size="13" fill="#00ff00" textLength="27" lengthAdjust="spacingAndGlyphs" stroke="#00ff00" stroke-width="0.35">旧底图总号</text>
<text class="tc" x="30" y="616.2" font-size="13" fill="#00ff00" textLength="5" lengthAdjust="spacingAndGlyphs" stroke="#00ff00" stroke-width="0.35">签</text>
<text class="tc" x="43" y="616.2" font-size="13" fill="#00ff00" textLength="4.5" lengthAdjust="spacingAndGlyphs" stroke="#00ff00" stroke-width="0.35">字</text>
<text class="tc" x="30" y="655.2" font-size="13" fill="#00ff00" textLength="3.5" lengthAdjust="spacingAndGlyphs" stroke="#00ff00" stroke-width="0.35">日</text>
<text class="tc" x="41" y="655.2" font-size="13" fill="#00ff00" textLength="5" lengthAdjust="spacingAndGlyphs" stroke="#00ff00" stroke-width="0.35">期</text>
<text class="t" x="563.5" y="509" font-size="12.5" fill="#00ff00" textLength="6" lengthAdjust="spacingAndGlyphs" stroke="#00ff00" stroke-width="0.2">3</text>
<text class="t" x="581.5" y="509" font-size="12.5" fill="#00ff00" textLength="60" lengthAdjust="spacingAndGlyphs" stroke="#00ff00" stroke-width="0.2">ZDQ.00.06.03</text>
<text class="tc" x="667" y="508.6" font-size="10.5" fill="#00ff00" textLength="30" lengthAdjust="spacingAndGlyphs" stroke="#00ff00" stroke-width="0.35">摩擦片芯板</text>
<text class="t" x="751.5" y="509" font-size="12.5" fill="#00ff00" textLength="4" lengthAdjust="spacingAndGlyphs" stroke="#00ff00" stroke-width="0.2">1</text>
<text class="t" x="793.5" y="509" font-size="12.5" fill="#00ff00" textLength="25" lengthAdjust="spacingAndGlyphs" stroke="#00ff00" stroke-width="0.2">65Mn</text>
<text class="t" x="563.5" y="527.5" font-size="12.5" fill="#00ff00" textLength="6" lengthAdjust="spacingAndGlyphs" stroke="#00ff00" stroke-width="0.2">2</text>
<text class="t" x="581.5" y="527.5" font-size="12.5" fill="#00ff00" textLength="60" lengthAdjust="spacingAndGlyphs" stroke="#00ff00" stroke-width="0.2">ZDQ.00.06.02</text>
<text class="tc" x="667" y="527.1" font-size="10.5" fill="#00ff00" textLength="18" lengthAdjust="spacingAndGlyphs" stroke="#00ff00" stroke-width="0.35">粘结层</text>
<text class="t" x="751.5" y="527.5" font-size="12.5" fill="#00ff00" textLength="4" lengthAdjust="spacingAndGlyphs" stroke="#00ff00" stroke-width="0.2">1</text>
<text class="t" x="563.5" y="546" font-size="12.5" fill="#00ff00" textLength="6" lengthAdjust="spacingAndGlyphs" stroke="#00ff00" stroke-width="0.2">1</text>
<text class="t" x="581.5" y="546" font-size="12.5" fill="#00ff00" textLength="60" lengthAdjust="spacingAndGlyphs" stroke="#00ff00" stroke-width="0.2">ZDQ.00.06.01</text>
<text class="tc" x="667" y="545.6" font-size="10.5" fill="#00ff00" textLength="30" lengthAdjust="spacingAndGlyphs" stroke="#00ff00" stroke-width="0.35">摩擦片外层</text>
<text class="t" x="751.5" y="546" font-size="12.5" fill="#00ff00" textLength="4" lengthAdjust="spacingAndGlyphs" stroke="#00ff00" stroke-width="0.2">1</text>
<text class="tc" x="796.5" y="545.8" font-size="11" fill="#00ff00" textLength="12.5" lengthAdjust="spacingAndGlyphs" stroke="#00ff00" stroke-width="0.35">石墨</text>
<text class="tc" x="557" y="569.8" font-size="13" fill="#00ff00" textLength="11" lengthAdjust="spacingAndGlyphs" stroke="#00ff00" stroke-width="0.35">序号</text>
<text class="tc" x="604" y="569.8" font-size="13" fill="#00ff00" textLength="6" lengthAdjust="spacingAndGlyphs" stroke="#00ff00" stroke-width="0.35">代</text>
<text class="tc" x="625.5" y="569.8" font-size="13" fill="#00ff00" textLength="4.5" lengthAdjust="spacingAndGlyphs" stroke="#00ff00" stroke-width="0.35">号</text>
<text class="tc" x="684.5" y="569.8" font-size="13" fill="#00ff00" textLength="5" lengthAdjust="spacingAndGlyphs" stroke="#00ff00" stroke-width="0.35">名</text>
<text class="tc" x="704.5" y="569.8" font-size="13" fill="#00ff00" textLength="6.5" lengthAdjust="spacingAndGlyphs" stroke="#00ff00" stroke-width="0.35">称</text>
<text class="tc" x="744" y="569.8" font-size="13" fill="#00ff00" textLength="11" lengthAdjust="spacingAndGlyphs" stroke="#00ff00" stroke-width="0.35">数量</text>
<text class="tc" x="783.5" y="569.8" font-size="13" fill="#00ff00" textLength="6" lengthAdjust="spacingAndGlyphs" stroke="#00ff00" stroke-width="0.35">材</text>
<text class="tc" x="808" y="569.8" font-size="13" fill="#00ff00" textLength="6" lengthAdjust="spacingAndGlyphs" stroke="#00ff00" stroke-width="0.35">料</text>
<text class="tc" x="849.5" y="561.2" font-size="10" fill="#00ff00" textLength="12" lengthAdjust="spacingAndGlyphs" stroke="#00ff00" stroke-width="0.35">单件</text>
<text class="tc" x="876.5" y="561.2" font-size="10" fill="#00ff00" textLength="12" lengthAdjust="spacingAndGlyphs" stroke="#00ff00" stroke-width="0.35">总计</text>
<text class="tc" x="859.5" y="575.2" font-size="10" fill="#00ff00" textLength="5" lengthAdjust="spacingAndGlyphs" stroke="#00ff00" stroke-width="0.35">重</text>
<text class="tc" x="873" y="575.2" font-size="10" fill="#00ff00" textLength="5" lengthAdjust="spacingAndGlyphs" stroke="#00ff00" stroke-width="0.35">量</text>
<text class="tc" x="915" y="569.8" font-size="13" fill="#00ff00" textLength="6" lengthAdjust="spacingAndGlyphs" stroke="#00ff00" stroke-width="0.35">备</text>
<text class="tc" x="936" y="569.8" font-size="13" fill="#00ff00" textLength="6" lengthAdjust="spacingAndGlyphs" stroke="#00ff00" stroke-width="0.35">注</text>
<text class="tc" x="724.5" y="614" font-size="16" fill="#00ff00" textLength="47" lengthAdjust="spacingAndGlyphs" stroke="#00ff00" stroke-width="0.12">石墨基材料</text>
<text class="tc" x="831.5" y="600" font-size="11" fill="#00ff00" textLength="75" lengthAdjust="spacingAndGlyphs" stroke="#00ff00" stroke-width="0.35">中国矿业大学应用技术学院机自</text>
<text class="t" x="907.5" y="600.8" font-size="12" fill="#00ff00" textLength="20" lengthAdjust="spacingAndGlyphs" stroke="#00ff00" stroke-width="0.2">07-2</text>
<text class="tc" x="878.8" y="634.3" font-size="13.5" fill="#00ff00" textLength="25.5" lengthAdjust="spacingAndGlyphs" stroke="#00ff00" stroke-width="0.35">内摩擦片</text>
<text class="t" x="873" y="668" font-size="17" fill="#00ff00" textLength="51" lengthAdjust="spacingAndGlyphs">ZDQ.00.06</text>
<text class="tc" x="556" y="633.2" font-size="9" fill="#00ff00" textLength="9.5" lengthAdjust="spacingAndGlyphs" stroke="#00ff00" stroke-width="0.35">标记</text>
<text class="tc" x="574" y="633.2" font-size="9" fill="#00ff00" textLength="8" lengthAdjust="spacingAndGlyphs" stroke="#00ff00" stroke-width="0.35">处数</text>
<text class="tc" x="596" y="633.2" font-size="9" fill="#00ff00" textLength="20" lengthAdjust="spacingAndGlyphs" stroke="#00ff00" stroke-width="0.35">更改文件号</text>
<text class="tc" x="644" y="633.2" font-size="9" fill="#00ff00" textLength="4" lengthAdjust="spacingAndGlyphs" stroke="#00ff00" stroke-width="0.35">签</text>
<text class="tc" x="651" y="633.2" font-size="9" fill="#00ff00" textLength="4" lengthAdjust="spacingAndGlyphs" stroke="#00ff00" stroke-width="0.35">字</text>
<text class="tc" x="675" y="633.2" font-size="9" fill="#00ff00" textLength="7.5" lengthAdjust="spacingAndGlyphs" stroke="#00ff00" stroke-width="0.35">日期</text>
<text class="tc" x="563.5" y="644.6" font-size="9" fill="#00ff00" textLength="10" lengthAdjust="spacingAndGlyphs" stroke="#00ff00" stroke-width="0.35">设计</text>
<text class="tc" x="598.5" y="644.6" font-size="9" fill="#00ff00" textLength="10" lengthAdjust="spacingAndGlyphs" stroke="#00ff00" stroke-width="0.35">(日期)</text>
<text class="tc" x="631" y="644.6" font-size="9" fill="#00ff00" textLength="12" lengthAdjust="spacingAndGlyphs" stroke="#00ff00" stroke-width="0.35">标准化</text>
<text class="tc" x="563.5" y="667.6" font-size="9" fill="#00ff00" textLength="10" lengthAdjust="spacingAndGlyphs" stroke="#00ff00" stroke-width="0.35">审核</text>
<text class="tc" x="563.5" y="678.1" font-size="9" fill="#00ff00" textLength="10" lengthAdjust="spacingAndGlyphs" stroke="#00ff00" stroke-width="0.35">工艺</text>
<text class="tc" x="632.5" y="678.1" font-size="9" fill="#00ff00" textLength="10" lengthAdjust="spacingAndGlyphs" stroke="#00ff00" stroke-width="0.35">日期</text>
<text class="tc" x="710.5" y="645.6" font-size="9" fill="#00ff00" textLength="23" lengthAdjust="spacingAndGlyphs" stroke="#00ff00" stroke-width="0.35">图样标记</text>
<text class="tc" x="771.5" y="645.6" font-size="9" fill="#00ff00" textLength="10" lengthAdjust="spacingAndGlyphs" stroke="#00ff00" stroke-width="0.35">重量</text>
<text class="tc" x="805.5" y="645.6" font-size="9" fill="#00ff00" textLength="10" lengthAdjust="spacingAndGlyphs" stroke="#00ff00" stroke-width="0.35">比例</text>
<text class="t" x="808.5" y="663.5" font-size="8.5" fill="#00ff00" textLength="8" lengthAdjust="spacingAndGlyphs" stroke="#00ff00" stroke-width="0.2">1:1</text>
<text class="tc" x="712.5" y="678.1" font-size="9" fill="#00ff00" textLength="4" lengthAdjust="spacingAndGlyphs" stroke="#00ff00" stroke-width="0.35">共</text>
<text class="tc" x="723" y="678.1" font-size="9" fill="#00ff00" textLength="11" lengthAdjust="spacingAndGlyphs" stroke="#00ff00" stroke-width="0.35">3张</text>
<text class="tc" x="781.5" y="678.1" font-size="9" fill="#00ff00" textLength="4" lengthAdjust="spacingAndGlyphs" stroke="#00ff00" stroke-width="0.35">第</text>
<text class="tc" x="793" y="678.1" font-size="9" fill="#00ff00" textLength="11" lengthAdjust="spacingAndGlyphs" stroke="#00ff00" stroke-width="0.35">6张</text>
</g>
</svg>
<div id="topbar">
<i style="left:293px;width:49px;background:#ececec;border-left:1px solid #d8dce8;border-right:1px solid #8a8a8a;border-bottom:1px solid #9a9a9a"></i>
<i style="left:297px;width:3px;height:1px;background:#203080"></i><i style="left:329px;width:2px;height:1px;background:#203080"></i>
<i style="left:345px;width:10px;background:#e6e6e6"></i><i style="left:349px;width:1px;background:#8a8a8a"></i><i style="left:353px;width:1px;background:#8a8a8a"></i>
<i style="left:357px;width:2px;background:#e6e6ee"></i>
<i style="left:507px;width:8px;background:#e4e4e4"></i><i style="left:510px;width:1px;background:#555"></i>
<i style="left:674px;width:8px;background:#e4e4e4"></i><i style="left:678px;width:1px;background:#555"></i>
<i style="left:800px;width:6px;background:#e8e8e8"></i><i style="left:807px;width:1px;background:#444"></i>
<i style="left:811px;width:118px;background:#fff;border-left:1px solid #8a8a8a;border-right:1px solid #8a8a8a;border-bottom:1px solid #8a8a8a"></i>
<i style="left:814px;width:98px;height:3px;background:#ececec"></i>
<i style="left:933px;width:1px;height:5px;background:#a0a0a0"></i>
<i style="left:934px;width:57px;height:5px;background:#ececec"></i>
</div>
<div id="botbar">
<i style="left:0;width:8px"></i><i style="left:10px;width:12px"></i><i style="left:23px;width:17px"></i><i style="left:41px;width:17px"></i><i style="left:59px;width:2px"></i>
<i style="left:71px;width:1px;background:#fff"></i><i style="left:74px;width:5px;background:#fff"></i><i style="left:82px;width:6px;background:#fff"></i><i style="left:92px;width:1px;background:#fff"></i>
<i style="left:100px;width:1px"></i><i style="left:102px;width:7px"></i><i style="left:110px;width:7px"></i><i style="left:119px;width:6px"></i><i style="left:127px;width:14px"></i><i style="left:143px;width:7px"></i><i style="left:152px;width:7px"></i><i style="left:161px;width:6px"></i><i style="left:169px;width:14px"></i>
<i style="left:185px;width:806px"></i>
</div>
</div>
</body>
</html>
